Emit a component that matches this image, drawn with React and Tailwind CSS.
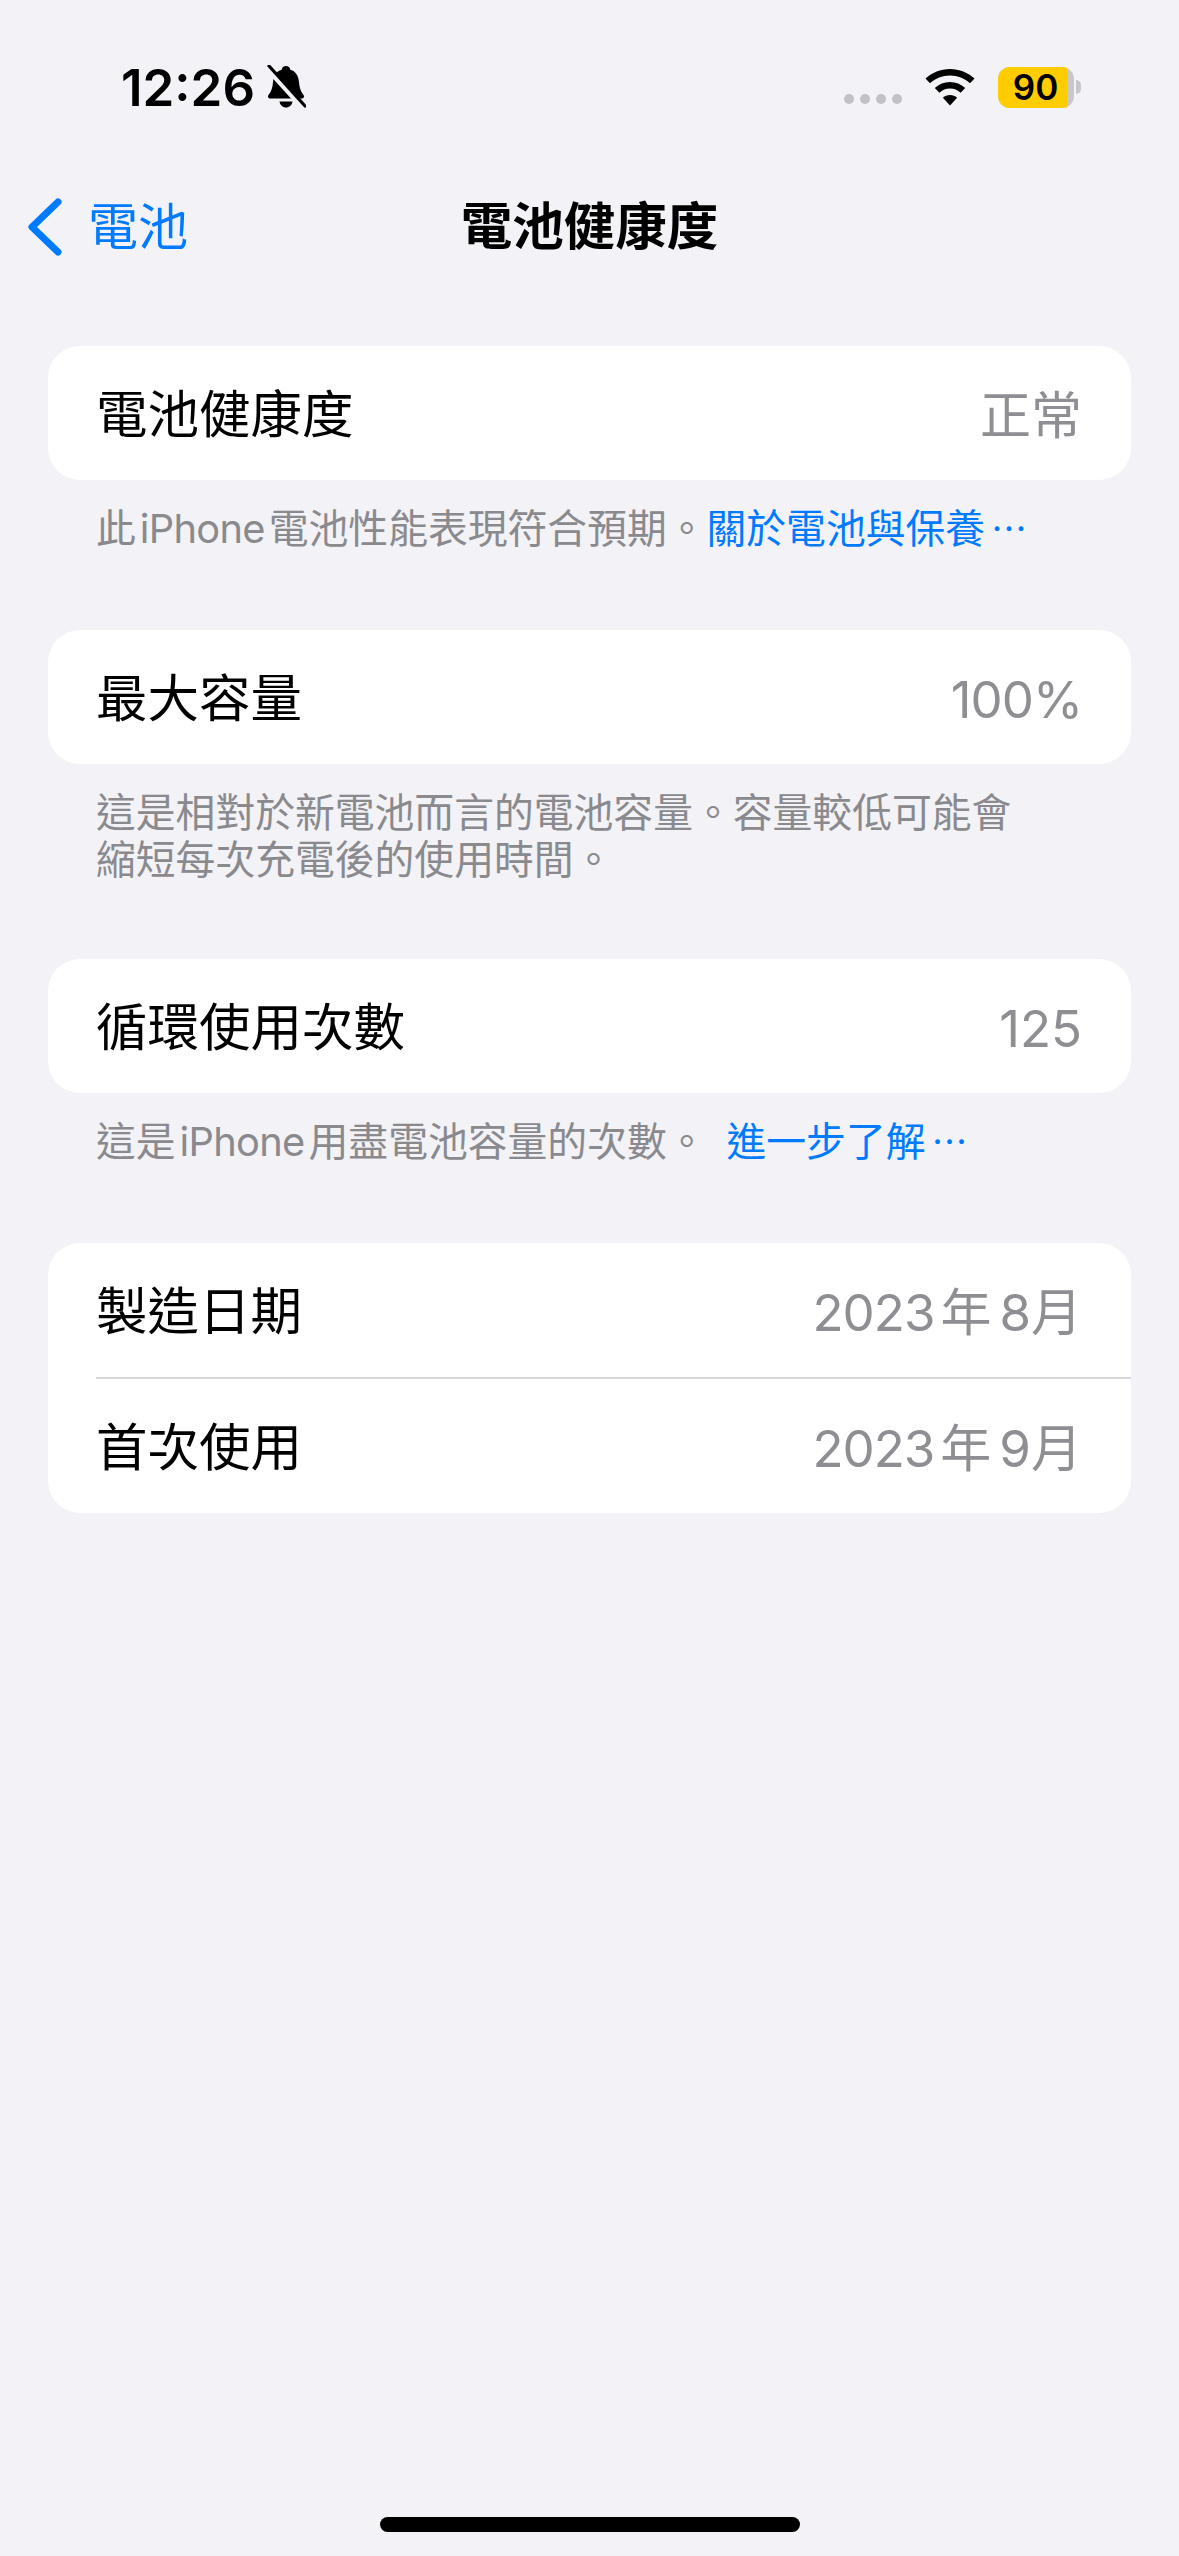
const sans = { fontFamily: '"Inter", "Noto Sans CJK TC", sans-serif' };

function BellOff() {
  return (
    <svg width="40" height="44" viewBox="0 0 40 44" className="ml-[11px]">
      <path d="M20 1c2.400 0 4 1.600 4.300 3.800 6 1.600 8.200 6.700 8.700 12.500.4 5.500 1.700 9.200 4.500 12.700 1.200 1.600.3 3.500-1.800 3.500H4.300c-2.100 0-3-1.900-1.800-3.500 2.800-3.500 4.100-7.200 4.500-12.700.5-5.800 2.700-10.900 8.700-12.500C16 2.600 17.600 1 20 1z" fill="#000" />
      <path d="M13.500 36.500h13c-.5 3.500-3.100 6-6.500 6s-6-2.500-6.500-6z" fill="#000" />
      <path d="M1 3.500 37 43" stroke="#f2f2f7" strokeWidth="5" />
      <path d="M3 1 39 41" stroke="#000" strokeWidth="3.200" strokeLinecap="round" />
    </svg>
  );
}

function Wifi() {
  return (
    <svg width="50" height="37" viewBox="0 0 50 37">
      <path d="M25 0c9.400 0 18 3.600 24.500 9.500L45 14.300C39.700 9.500 32.700 6.500 25 6.500S10.300 9.500 5 14.300L.5 9.500C7 3.600 15.600 0 25 0z" fill="#000" />
      <path d="M25 13c5.800 0 11.100 2.200 15.200 5.900l-4.600 4.800c-2.800-2.500-6.500-4.100-10.600-4.100s-7.800 1.600-10.600 4.100l-4.600-4.800C13.900 15.200 19.200 13 25 13z" fill="#000" />
      <path d="M25 26c2.700 0 5.200 1 7.100 2.700L25 36.500l-7.100-7.800C19.800 27 22.300 26 25 26z" fill="#000" />
    </svg>
  );
}

function Battery() {
  return (
    <div className="flex items-center">
      <div className="flex h-[41px] w-[76px] overflow-hidden rounded-[12px] bg-[#c7c7cc]">
        <div className="flex w-[69px] items-center justify-center bg-[#ffcc00] pl-[6px] text-[35px] font-semibold text-black">90</div>
      </div>
      <div className="ml-[2px] h-[14px] w-[5px] rounded-r-full bg-[#c7c7cc]" />
    </div>
  );
}

function StatusBar() {
  return (
    <div className="flex h-[177px] shrink-0 items-center justify-between pr-[98px] pb-[3px] pl-[121px]">
      <div className="flex items-center">
        <span className="text-[51px] leading-none font-semibold text-black">12:26</span>
        <BellOff />
      </div>
      <div className="flex items-center">
        <div className="mt-[24px] mr-[23px] flex gap-[6px]">
          {[0, 1, 2, 3].map((i) => (
            <span key={i} className="h-[10px] w-[10px] rounded-full bg-[#c2c2c6]" />
          ))}
        </div>
        <Wifi />
        <div className="ml-[23px]"><Battery /></div>
      </div>
    </div>
  );
}

function NavBar() {
  return (
    <div className="grid h-[100px] shrink-0 grid-cols-3 items-center">
      <div className="flex items-center pl-[27px] text-[#007aff]">
        <svg width="36" height="58" viewBox="0 0 36 58">
          <path d="M31 4 5 29l26 25" fill="none" stroke="#007aff" strokeWidth="7" strokeLinecap="round" strokeLinejoin="round" />
        </svg>
        <span className="ml-[25px] text-[50px] leading-none">電池</span>
      </div>
      <div className="text-center text-[51.500px] leading-none font-semibold whitespace-nowrap text-black">電池健康度</div>
      <div />
    </div>
  );
}

function Row({ label, value }) {
  return (
    <div className="flex h-[134px] items-center justify-between pt-[4px] pr-[49px] pl-[48px]">
      <span className="text-[51.500px] leading-none text-black">{label}</span>
      <span className="text-[51px] leading-none text-[#8e8e93]">{value}</span>
    </div>
  );
}

// year and month sit tighter than a full space
function YearMonth({ year, month }) {
  return (
    <>
      <span className="tracking-[-1px]">{year}</span>
      <span className="ml-[6px]">年</span>
      <span className="ml-[8px]">{month}</span>
      月
    </>
  );
}

function Card({ children }) {
  return <div className="mx-[48px] overflow-hidden rounded-[32px] bg-white">{children}</div>;
}

function Footer({ children }) {
  return <div className="mx-[48px] mt-[25px] h-[47px] pl-[48px] text-[39.800px] leading-[47px] whitespace-nowrap text-[#8a8a8e]">{children}</div>;
}

function Link({ children }) {
  return (
    <span className="text-[#007aff]">
      {children}
      <span className="ml-[6px] text-[36px] leading-none">⋯</span>
    </span>
  );
}

export default function App() {
  return (
    <div className="flex h-[2556px] w-[1179px] flex-col overflow-hidden bg-[#f2f2f7]" style={sans}>
      <StatusBar />
      <NavBar />

      <div className="mt-[69px]">
        <Card><Row label="電池健康度" value="正常" /></Card>
        <Footer>此<span className="mx-[4px] tracking-[-0.7px]">iPhone</span>電池性能表現符合預期。<Link>關於電池與保養</Link></Footer>
      </div>

      <div className="mt-[78px]">
        <Card><Row label="最大容量" value={<span className="tracking-[-1px]">100%</span>} /></Card>
        <Footer>這是相對於新電池而言的電池容量。容量較低可能會</Footer>
        <div className="mx-[48px] pl-[48px] text-[39.800px] leading-[47px] text-[#8a8a8e]">縮短每次充電後的使用時間。</div>
      </div>

      <div className="mt-[76px]">
        <Card><Row label="循環使用次數" value="125" /></Card>
        <Footer>這是<span className="mx-[4px] tracking-[-0.7px]">iPhone</span>用盡電池容量的次數。<span className="ml-[20px]" /><Link>進一步了解</Link></Footer>
      </div>

      <div className="mt-[78px]">
        <Card>
          <Row label="製造日期" value={<YearMonth year="2023" month="8" />} />
          <div className="ml-[48px] h-[2px] bg-[#d8d8da]" />
          <Row label="首次使用" value={<YearMonth year="2023" month="9" />} />
        </Card>
      </div>

      <div className="mt-auto mb-[24px] h-[15px] w-[420px] self-center rounded-full bg-black" />
    </div>
  );
}
